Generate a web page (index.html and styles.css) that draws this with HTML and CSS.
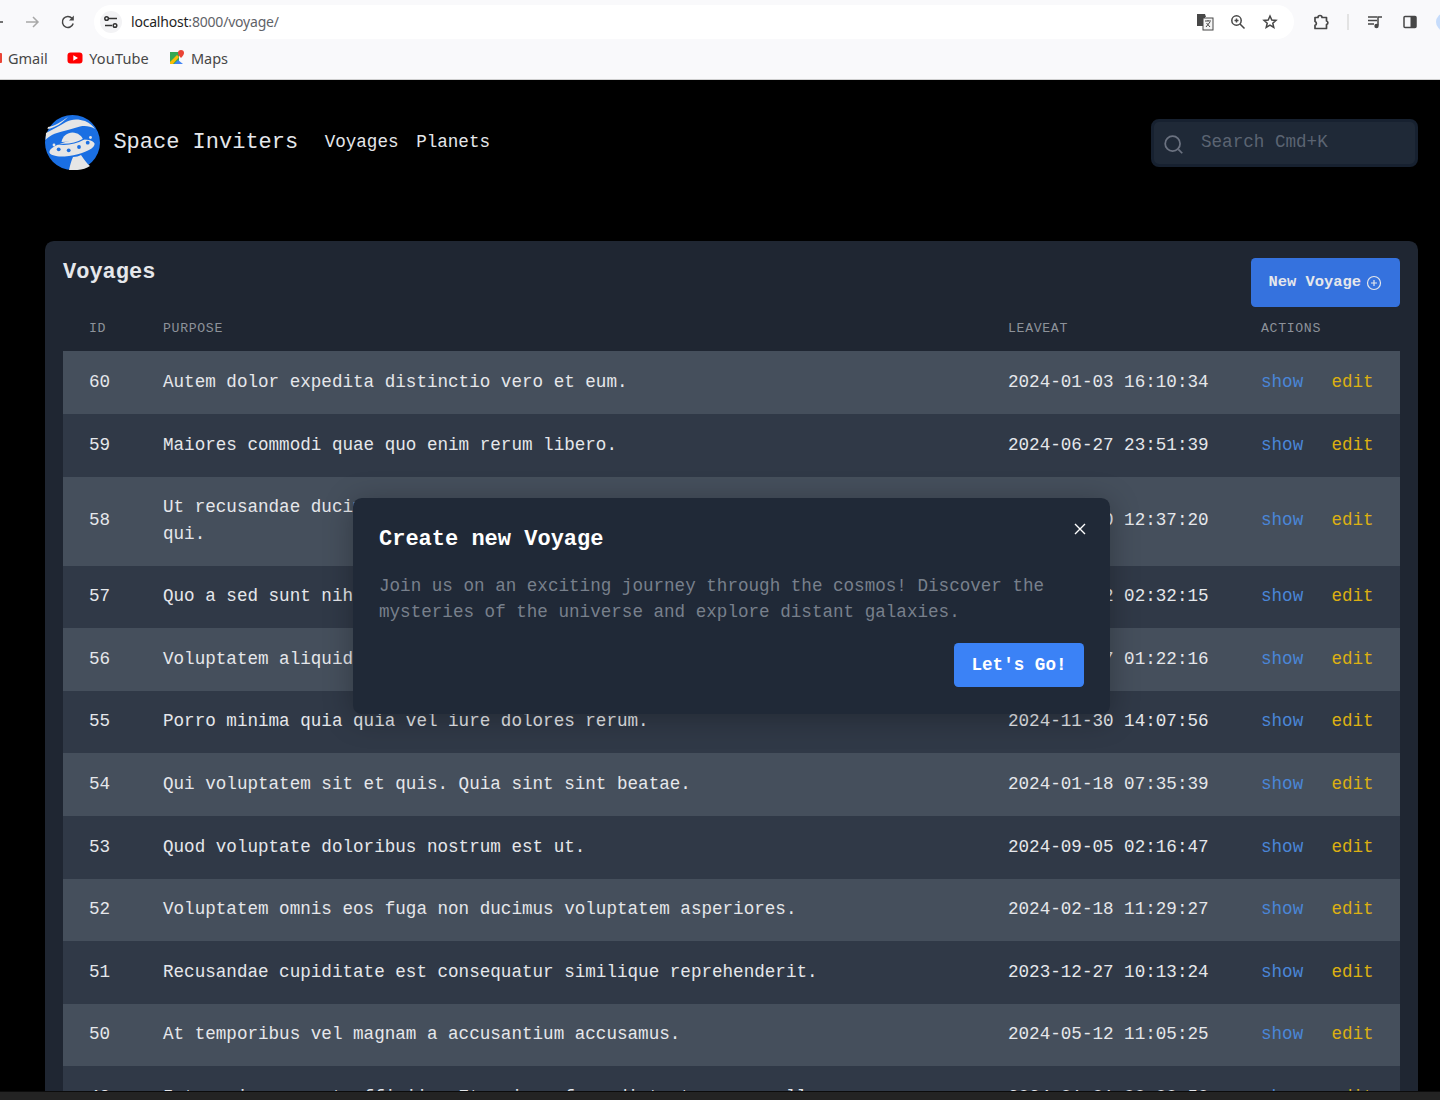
FILE: index.html
```html
<!DOCTYPE html>
<html lang="en">
<head>
<meta charset="utf-8">
<title>Voyages</title>
<link rel="stylesheet" href="styles.css">
</head>
<body>
<div class="chrome">
  <div class="toolbar">
    <svg class="ti ti-back" viewBox="0 0 16 16"><path d="M14 8H2M7 3L2 8l5 5"/></svg>
    <svg class="ti ti-fwd" viewBox="0 0 16 16"><path d="M2 8h12M9 3l5 5-5 5"/></svg>
    <svg class="ti ti-reload" viewBox="0 0 16 16"><path d="M13.2 9.5A5.5 5.5 0 1 1 12 4.2"/><path class="fill" d="M13.8 1.6v4.8H9z"/></svg>
    <div class="omnibox">
      <span class="tune"><svg viewBox="0 0 16 16"><path d="M6 4.5h8M2 11.5h7"/><circle cx="3.6" cy="4.5" r="1.8"/><circle cx="12" cy="11.5" r="1.8"/></svg></span>
      <span class="url"><b>localhost</b>:8000/voyage/</span>
      <span class="omni-icons">
        <svg class="ti" viewBox="0 0 18 18"><path class="fill" d="M1 1h8l1 3h-1v9H1z"/><rect class="paper" x="7" y="5" width="10" height="12"/><path class="thin" d="M9 8h6M12 7v1M10 14l4-5M10.500 10l3.500 4"/></svg>
        <svg class="ti" viewBox="0 0 16 16"><circle cx="6.500" cy="6.500" r="4.700"/><path d="M10 10l4.500 4.500M4.500 6.500h4M6.500 4.500v4"/></svg>
        <svg class="ti" viewBox="0 0 16 16"><path d="M8 2l1.800 4 4.200.4-3.200 2.800 1 4.300L8 11.200 4.200 13.500l1-4.300L2 6.400 6.200 6z"/></svg>
      </span>
    </div>
    <svg class="ti ti-ext" viewBox="0 0 18 18"><path d="M3 4.500h3a2 2 0 0 1 4 0h4.500v3.500a1.800 1.800 0 0 1 0 3.500V15.500H3v-3.200a2 2 0 0 0 0-3.800z" stroke-linejoin="round"/></svg>
    <span class="tb-sep"></span>
    <svg class="ti ti-media" viewBox="0 0 18 18"><path d="M2 4h9M2 7.500h9M2 11h6M12 12.500V4h4"/><circle class="fill" cx="10.500" cy="13" r="2.200"/></svg>
    <svg class="ti ti-side" viewBox="0 0 16 16"><rect x="2" y="2.500" width="12" height="11" rx="1"/><rect class="fill" x="8.500" y="2.500" width="5.500" height="11"/></svg>
    <span class="avatar"></span>
  </div>
  <div class="bookmarks">
    <span class="bm bm-gmail"><i class="gm"></i>Gmail</span>
    <span class="bm bm-yt"><svg class="yt" viewBox="0 0 16 12"><rect width="15" height="11" x=".5" y=".5" rx="3" fill="#f00"/><path d="M6.300 3.300v5.400L11 6z" fill="#fff"/></svg>YouTube</span>
    <span class="bm bm-maps"><svg class="maps" viewBox="0 0 16 16"><path fill="#34a853" d="M1 2h9v12H1z"/><path fill="#fbbc04" d="M1 12L8 5l2 2-6 7H1z"/><path fill="#4285f4" d="M5 14l4-4 5 4z"/><path fill="#ea4335" d="M12 0a3 3 0 0 1 3 3c0 2-3 5-3 5s-3-3-3-5a3 3 0 0 1 3-3z"/></svg>Maps</span>
  </div>
</div>

<div class="viewport">
  <header class="site">
    <svg class="logo" viewBox="0 0 55 55">
      <circle cx="27.500" cy="27.500" r="27.500" fill="#1a6fe3"/>
      <path fill="#e6e6e6" d="M3 12C10 11 16 7 23 2C17 8 10 13 2.500 14z"/>
      <path fill="#e6e6e6" d="M1 18C8 14 15 11 21 7C26 4 33 3.500 40 6C45 8 48 11 50 14C45 11 40 10.500 35 11.500C29 13 24 15 17 16.500C10 18 4 21 .5 25z"/>
      <path fill="#e6e6e6" d="M16.500 27c1-6 6-9.500 11-9.500s10 3.500 11 8.500z"/>
      <ellipse cx="27" cy="33" rx="23" ry="7.500" fill="#e6e6e6" transform="rotate(-11 27 33)"/>
      <path fill="none" stroke="#1a6fe3" stroke-width="1.200" d="M13 29c8 1 18-.5 26-5"/>
      <circle cx="13.700" cy="34.300" r="1.900" fill="#1a6fe3"/><circle cx="23.700" cy="35.300" r="1.900" fill="#1a6fe3"/><circle cx="34" cy="32" r="1.900" fill="#1a6fe3"/><circle cx="42.700" cy="27.700" r="1.900" fill="#1a6fe3"/>
      <circle cx="9" cy="30" r="1.400" fill="#e6e6e6"/><circle cx="45.500" cy="22.500" r="1.400" fill="#e6e6e6"/>
      <path fill="#e6e6e6" d="M28 42c3 0 6-1 8-2 3 4 6 9 9 11-5 3.500-11 4.500-21 4 1-4 2-9 4-13z"/>
    </svg>
    <span class="brand">Space Inviters</span>
    <nav class="nav"><a>Voyages</a><a>Planets</a></nav>
    <div class="search">
      <svg viewBox="0 0 24 24"><circle cx="11" cy="11" r="8.500"/><path d="M17.500 17.500L22 22"/></svg>
      <span>Search Cmd+K</span>
    </div>
  </header>

  <main class="panel">
    <div class="panel-head">
      <h1>Voyages</h1>
      <button class="btn-new">New Voyage<svg viewBox="0 0 16 16"><circle cx="8" cy="8" r="6.500"/><path d="M8 5v6M5 8h6"/></svg></button>
    </div>
    <table class="table">
      <colgroup><col class="c1"><col class="c2"><col class="c3"><col class="c4"></colgroup>
      <thead><tr><th>ID</th><th>Purpose</th><th>LeaveAt</th><th>Actions</th></tr></thead>
      <tbody>
        <tr><td>60</td><td>Autem dolor expedita distinctio vero et eum.</td><td>2024-01-03 16:10:34</td><td><a class="show">show</a> <a class="edit">edit</a></td></tr>
        <tr><td>59</td><td>Maiores commodi quae quo enim rerum libero.</td><td>2024-06-27 23:51:39</td><td><a class="show">show</a> <a class="edit">edit</a></td></tr>
        <tr><td>58</td><td>Ut recusandae ducimus voluptas aut quibusdam dolorem sapiente repellendus qui.</td><td>2024-04-10 12:37:20</td><td><a class="show">show</a> <a class="edit">edit</a></td></tr>
        <tr><td>57</td><td>Quo a sed sunt nihil dolores eos.</td><td>2024-08-12 02:32:15</td><td><a class="show">show</a> <a class="edit">edit</a></td></tr>
        <tr><td>56</td><td>Voluptatem aliquid nemo sit ipsam.</td><td>2024-03-17 01:22:16</td><td><a class="show">show</a> <a class="edit">edit</a></td></tr>
        <tr><td>55</td><td>Porro minima quia quia vel iure dolores rerum.</td><td>2024-11-30 14:07:56</td><td><a class="show">show</a> <a class="edit">edit</a></td></tr>
        <tr><td>54</td><td>Qui voluptatem sit et quis. Quia sint sint beatae.</td><td>2024-01-18 07:35:39</td><td><a class="show">show</a> <a class="edit">edit</a></td></tr>
        <tr><td>53</td><td>Quod voluptate doloribus nostrum est ut.</td><td>2024-09-05 02:16:47</td><td><a class="show">show</a> <a class="edit">edit</a></td></tr>
        <tr><td>52</td><td>Voluptatem omnis eos fuga non ducimus voluptatem asperiores.</td><td>2024-02-18 11:29:27</td><td><a class="show">show</a> <a class="edit">edit</a></td></tr>
        <tr><td>51</td><td>Recusandae cupiditate est consequatur similique reprehenderit.</td><td>2023-12-27 10:13:24</td><td><a class="show">show</a> <a class="edit">edit</a></td></tr>
        <tr><td>50</td><td>At temporibus vel magnam a accusantium accusamus.</td><td>2024-05-12 11:05:25</td><td><a class="show">show</a> <a class="edit">edit</a></td></tr>
        <tr><td>49</td><td>Iste quia quo aut officiis. Et quia a fuga dicta tempora nulla.</td><td>2024-01-01 00:00:50</td><td><a class="show">show</a> <a class="edit">edit</a></td></tr>
      </tbody>
    </table>
  </main>

  <section class="modal">
    <svg class="close" viewBox="0 0 12 12"><path d="M1 1l10 10M11 1L1 11"/></svg>
    <h2>Create new Voyage</h2>
    <p>Join us on an exciting journey through the cosmos! Discover the mysteries of the universe and explore distant galaxies.</p>
    <div class="modal-foot"><button class="btn-go">Let's Go!</button></div>
  </section>
</div>
<div class="statusbar"></div>
</body>
</html>
```
FILE: styles.css
```css
* { box-sizing: border-box; }
html, body { margin: 0; height: 100%; }
body {
  display: flex;
  flex-direction: column;
  height: 1100px;
  overflow: hidden;
  background: #000;
  font-family: "Liberation Mono", monospace;
}

/* browser chrome */
.chrome {
  height: 80px;
  flex: none;
  background: #f9f9fb;
  border-bottom: 1px solid #cfcfcf;
  font-family: "Noto Sans", sans-serif;
  overflow: hidden;
}
.toolbar {
  height: 40px;
  display: flex;
  align-items: center;
  padding-top: 4px;
}
.ti {
  width: 16px;
  height: 16px;
  flex: none;
  fill: none;
  stroke: #474747;
  stroke-width: 1.5;
}
.ti .fill { fill: #474747; stroke: none; }
.ti .paper { fill: #f4f4f4; stroke: #474747; stroke-width: 1; }
.ti .thin { stroke-width: 1; }
.ti-back { margin-left: -11px; }
.ti-fwd { margin-left: 19px; stroke: #a8a8a8; }
.ti-reload { margin-left: 20px; }
.omnibox {
  flex: none;
  width: 1200px;
  height: 34px;
  margin-left: 18px;
  border-radius: 17px;
  background: #fff;
  display: flex;
  align-items: center;
  padding: 0 16px 0 6px;
}
.tune {
  width: 22px;
  height: 22px;
  border-radius: 50%;
  background: #f3f3f5;
  display: flex;
  align-items: center;
  justify-content: center;
}
.tune svg { width: 16px; height: 16px; fill: none; stroke: #333; stroke-width: 1.500; }
.url {
  margin-left: 9px;
  font-size: 14px;
  line-height: 18px;
  color: #5f6368;
  flex: 1;
  letter-spacing: -0.2px;
}
.url b { font-weight: 400; color: #1f1f1f; }
.omni-icons { display: flex; gap: 16px; align-items: center; }
.omni-icons .ti:first-child { width: 18px; height: 18px; }
.ti-ext { width: 18px; height: 18px; margin-left: 18px; stroke-width: 1.700; }
.tb-sep { flex: none; width: 2px; height: 16px; background: #e3e3e3; margin-left: 17px; }
.ti-media { width: 18px; height: 18px; margin-left: 17px; }
.ti-side { width: 16px; height: 16px; margin-left: 18px; }
.avatar {
  width: 18px;
  height: 18px;
  border-radius: 50%;
  background: #c6dcfb;
  margin-left: 18px;
  flex: none;
}
.bookmarks {
  height: 36px;
  display: flex;
  align-items: center;
  font-size: 14.500px;
  color: #474747;
}
.bm { display: flex; align-items: center; white-space: nowrap; }
.gm { width: 6px; height: 10px; background: #ea4335; margin-left: -4px; margin-right: 6px; border-radius: 1px; }
.bm-yt { margin-left: 19.500px; letter-spacing: .15px; }
.yt { width: 16px; height: 12px; margin-right: 6px; }
.bm-maps { margin-left: 20px; }
.maps { width: 16px; height: 16px; margin-right: 6px; }

/* page */
.viewport {
  flex: 1;
  min-height: 0;
  overflow: hidden;
  position: relative;
}
.site {
  display: flex;
  align-items: center;
  padding: 35px 22px 71px 45px;
  color: #e5e7eb;
}
.logo { width: 55px; height: 55px; flex: none; }
.brand { font-size: 22px; margin-left: 13.400px; }
.nav { display: flex; gap: 17.600px; margin-left: 26.400px; font-size: 17.6px; position: relative; bottom: 1px; }
.search {
  margin-left: auto;
  width: 267px;
  height: 48px;
  background: #1f2937;
  border: 3px solid #172130;
  border-radius: 8px;
  display: flex;
  align-items: center;
  padding-left: 9px;
  color: #5b6472;
  font-size: 17.6px;
}
.search svg { width: 21px; height: 21px; fill: none; stroke: #6b7280; stroke-width: 2; margin: 3px 17px 0 0; }
.search span { position: relative; bottom: 1px; }

.panel {
  margin: 0 22px 0 45px;
  padding: 17px 18px 0;
  background: #1f2632;
  border-radius: 8.800px 8.800px 0 0;
}
.panel-head { display: flex; justify-content: space-between; align-items: flex-start; }
.panel-head h1 { margin: 0; padding-top: 2px; font-size: 22px; line-height: 26px; font-weight: 700; color: #e5e7eb; }
.btn-new {
  width: 149px;
  height: 49px;
  padding: 0 0 2px 17.600px;
  border: 0;
  border-radius: 4.400px;
  background: #3572de;
  color: #e5e7eb;
  font: 700 15.400px "Liberation Mono", monospace;
  display: flex;
  align-items: center;
  gap: 5px;
}
.btn-new svg { width: 16px; height: 16px; fill: none; stroke: #e5e7eb; stroke-width: 1.200; margin-top: 2px; }
.table {
  width: 1337px;
  table-layout: fixed;
  border-collapse: collapse;
  color: #e5e7eb;
  font-size: 17.600px;
  line-height: 26.400px;
}
.c1 { width: 73.600px; }
.c2 { width: 845px; }
.c3 { width: 253px; }
.c4 { width: 165.400px; }
th {
  text-align: left;
  padding: 13.200px 26.400px 13.650px;
  font-size: 13.200px;
  line-height: 17.600px;
  font-weight: 400;
  letter-spacing: .66px;
  text-transform: uppercase;
  color: #8d929a;
}
th:first-child, td:first-child { padding-left: 26px; }
td { padding: 17.600px 26.400px 18.600px; }
td:nth-child(3), td:nth-child(4) { padding-right: 0; white-space: nowrap; }
tbody tr:nth-child(odd) { background: #454f5c; }
tbody tr:nth-child(even) { background: #303947; }
.show { color: #4a86d8; }
.edit { color: #dcb012; margin-left: 17.600px; }

/* modal */
.modal {
  position: absolute;
  left: 353px;
  top: 418px;
  width: 757px;
  height: 216px;
  padding: 26px;
  background: #202937;
  border-radius: 8.800px;
  box-shadow: 0 4px 30px rgba(0, 0, 0, .28);
}
.modal h2 { margin: 0; padding-top: 2px; font-size: 22px; line-height: 28px; font-weight: 700; color: #fff; }
.modal p { margin: 19px 0 0; font-size: 17.600px; line-height: 26px; color: #78808c; }
.modal-foot { display: flex; justify-content: flex-end; margin-top: 18px; }
.btn-go {
  width: 130px;
  height: 44px;
  border: 0;
  border-radius: 4.400px;
  background: #3b82f6;
  color: #fff;
  font: 700 17.600px "Liberation Mono", monospace;
}
.close {
  position: absolute;
  top: 25px;
  right: 24px;
  width: 12px;
  height: 12px;
  fill: none;
  stroke: #fff;
  stroke-width: 1.400;
}
.statusbar {
  height: 9px;
  flex: none;
  background: #232323;
  border-top: 1px solid #0c0c0c;
}
```
